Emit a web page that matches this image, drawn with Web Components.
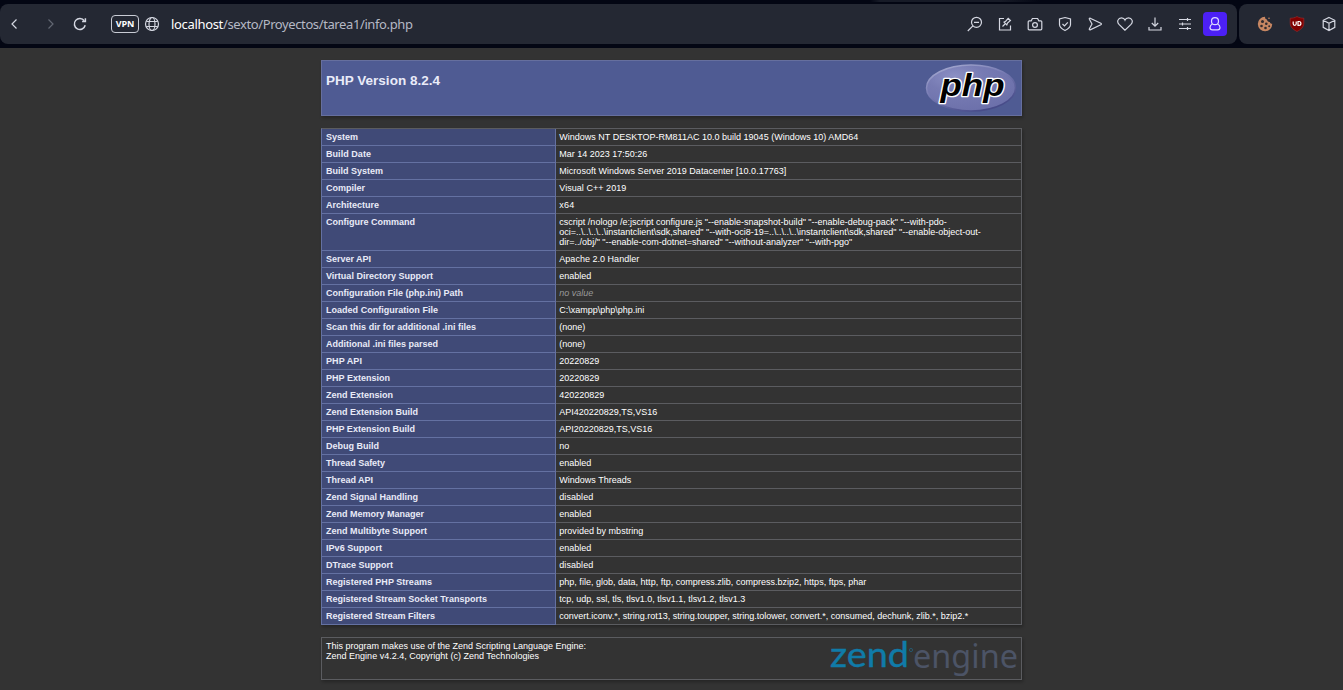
<!DOCTYPE html>
<html lang="es">
<head>
<meta charset="utf-8">
<title>PHP 8.2.4 - phpinfo()</title>
<style>
html,body{margin:0;height:100%;background:#333;overflow:hidden}
body{font-family:"Liberation Sans",Arial,sans-serif}
</style>
</head>
<body>
<browser-bar></browser-bar>
<php-info></php-info>
<script>
// Spreads the letters of a text evenly so that it takes the given width.
function fit(el, w) {
  const nat = el.getBoundingClientRect().width;
  el.style.letterSpacing = ((w - nat) / el.textContent.length).toFixed(4) + 'px';
}

class FitText extends HTMLElement {
  constructor() {
    super();
    this.attachShadow({mode: 'open'}).innerHTML =
      '<style>:host{display:inline-block;white-space:pre}</style><slot></slot>';
  }
  connectedCallback() { fit(this, +this.getAttribute('w')); }
}

const ICONS = {
  back: '<path d="M10.500 3.500 6 8l4.500 4.500"/>',
  forward: '<path d="M5.500 3.500 10 8l-4.500 4.500"/>',
  reload: '<path d="M13.200 9.300A5.500 5.500 0 1 1 12.300 4.700"/><path d="M13.400 2.300v3.200h-3.300"/>',
  globe: '<circle cx="8" cy="8" r="6.500"/><ellipse cx="8" cy="8" rx="3" ry="6.500"/><path d="M2.300 5.500h11.400M2.300 10.500h11.400"/>',
  zoom: '<circle cx="9.500" cy="6.300" r="5"/><path d="M5.900 9.900 .8 15M7 6.300h5"/>',
  pin: '<path d="M7 2.500H2.500v11.500h11V9.500"/><path d="m5.500 10.500 2.500-2.500M7 6.200l2.800 2.800.7-2 2.900-2.500-2.200-2.200-2.500 2.900z"/>',
  camera: '<path d="M1.200 5.800q0-1 1-1h2l1.200-2.300h5.200l1.200 2.300h2q1 0 1 1v7q0 1-1 1H2.200q-1 0-1-1z"/><circle cx="8" cy="9" r="2.400"/>',
  shield: '<path d="M8 1.500 13.500 3v5.500c0 2.800-3 4.800-5.500 6-2.500-1.200-5.500-3.200-5.500-6V3z"/><path d="m5.500 8 2 2 3.300-3.600"/>',
  send: '<path d="M3.200 2.200 13.800 7.200q1.200.8 0 1.600L3.200 13.800q-1.300.2-.8-1L5 8 2.400 3.200q-.5-1.200.8-1z"/>',
  heart: '<path d="M8 14.200 2 8.400C-.6 5.700 1.100 1.900 4.500 1.900 6.200 1.900 7.500 2.900 8 4.100 8.500 2.900 9.800 1.900 11.500 1.900c3.400 0 5.100 3.800 2.500 6.500z"/>',
  download: '<path d="M8 1.500v8.500M4.800 7 8 10.200 11.200 7M2 11v3h12v-3"/>',
  sliders: '<path d="M2 3.500h12M2 8h12M2 12.500h12M10.500 2v3M5.500 6.500v3M10.500 11v3"/>',
  user: '<circle cx="8" cy="5.200" r="3.500"/><path d="M5.300 8C3.500 8.900 3 10.200 3 11.500c0 1.600 1 2.300 2.400 2.300h5.200c1.400 0 2.400-.7 2.400-2.300 0-1.300-.5-2.600-2.300-3.500"/>',
  cube: '<path d="m8 1.500 5.800 2.800v7L8 14.500l-5.800-3.200v-7zM2.200 4.300 8 7.300l5.800-3M8 7.300v7.200"/>',
  cookie: '<path fill="#c68662" stroke="none" d="M8 .8c0 1.600.6 2.600 2 2.700.1 1.800 1.400 2.600 2.800 2.400.3 1.100 1 1.800 2.400 1.800A7.200 7.200 0 1 1 8 .8z"/><g fill="#302b30" stroke="none"><circle cx="5.500" cy="5.500" r="1.500"/><circle cx="9.300" cy="7.700" r="1.300"/><circle cx="4.500" cy="10" r="1.300"/><circle cx="8.500" cy="12" r="1.300"/><circle cx="12.200" cy="10.200" r="1"/><circle cx="12" cy="2.200" r=".8" fill="#c68662"/></g>',
  ublock: '<path fill="#800000" stroke="#a03030" stroke-width=".6" d="M8 .5c2 1.200 4 1.700 6.800 1.700v5c0 4-3 6.300-6.800 8.300-3.800-2-6.800-4.300-6.800-8.300v-5C4 2.200 6 1.700 8 .5z"/><path stroke="#fff" d="M4.200 5.500v2.300q0 1.500 1.500 1.500t1.500-1.500V5.500M9 5.500h1q1.900 0 1.900 1.900T10 9.300H9z"/>'
};
class UiIcon extends HTMLElement {
  constructor() {
    super();
    this.attachShadow({mode: 'open'}).innerHTML =
      `<style>:host{display:grid;place-items:center;width:16px;height:16px}svg{display:block;width:16px;height:16px;fill:none;stroke:currentColor;stroke-width:var(--sw,1.2)}</style><svg viewBox="0 0 16 16">${ICONS[this.getAttribute('name')]}</svg>`;
  }
}

class BrowserBar extends HTMLElement {
  connectedCallback() {
    this.attachShadow({mode: 'open'}).innerHTML = `<style>
:host{display:flex;box-sizing:border-box;height:48px;padding:4px 0;gap:2px;background:linear-gradient(90deg,transparent 870px,#171b27 880px,#171b27 1000px,transparent 1040px) 0 0/100% 2px no-repeat #030613;color:#d5d8e2;font-family:"Noto Sans","Open Sans",sans-serif}
.main,.ext{display:flex;align-items:center;background:#242833;height:40px;box-sizing:border-box}
.main{width:1237px;border-radius:8px;padding-left:6px}
.ext{flex:1;border-radius:8px 0 0 8px;padding-left:18px;gap:16px;overflow:hidden}
.ext ui-icon{flex:none}
.fwd{margin-left:21px;color:#626773}.re{margin-left:13px;--sw:1.5}
.vpn{margin-left:23px;box-sizing:border-box;width:28px;height:18px;border:1px solid #c9ccd5;border-radius:4px;display:grid;place-items:center;font:700 9px/16px "Open Sans",sans-serif;color:#fff}
.globe{margin-left:5px}
.url{margin-left:11px;display:flex;font-size:13px;line-height:20px;color:#b5b9c5;white-space:pre}
.host{color:#fff}
.tools{margin-left:auto;display:flex;align-items:center;gap:14px;padding-right:10px}
.acct{margin-left:-4px;width:24px;height:24px;border-radius:4px;background:#4c20f5;display:grid;place-items:center;color:#dcd8ff}
</style>
<div class="main"><ui-icon name="back"></ui-icon><ui-icon class="fwd" name="forward"></ui-icon><ui-icon class="re" name="reload"></ui-icon>
<div class="vpn"><fit-text w="18.5">VPN</fit-text></div><ui-icon class="globe" name="globe"></ui-icon>
<div class="url"><fit-text class="host" w="52">localhost</fit-text><fit-text w="189.5">/sexto/Proyectos/tarea1/info.php</fit-text></div>
<div class="tools">${['zoom','pin','camera','shield','send','heart','download','sliders'].map(n => `<ui-icon name="${n}"></ui-icon>`).join('')}<div class="acct"><ui-icon name="user"></ui-icon></div></div></div>
<div class="ext"><ui-icon name="cookie"></ui-icon><ui-icon name="ublock"></ui-icon><ui-icon name="cube"></ui-icon></div>`;
  }
}

class PhpLogo extends HTMLElement {
  constructor() {
    super();
    this.attachShadow({mode: 'open'}).innerHTML = `<style>:host{display:block;width:92px;height:49px}svg{display:block}
text{font:italic 700 32px "Liberation Sans",Arial,sans-serif;fill:#000;stroke:#fff;stroke-width:2.600px;paint-order:stroke;stroke-linejoin:round}</style>
<svg width="92" height="49" viewBox="0 0 92 49"><defs>
<radialGradient id="g" cx=".32" cy=".25" r=".8"><stop offset="0" stop-color="#8c90c4"/><stop offset=".4" stop-color="#777bb3"/><stop offset="1" stop-color="#6c70aa"/></radialGradient>
<linearGradient id="r" x2=".6" y2="1"><stop offset="0" stop-color="#aeb2d5"/><stop offset=".5" stop-color="#777bb3"/><stop offset="1" stop-color="#484c89"/></linearGradient></defs>
<ellipse cx="46" cy="24" rx="44.500" ry="23" fill="url(#g)" stroke="url(#r)" stroke-width="1.500"/>
<text x="15.500" y="32" textLength="64" lengthAdjust="spacingAndGlyphs">php</text></svg>`;
  }
}
class ZendLogo extends HTMLElement {
  constructor() {
    super();
    this.attachShadow({mode: 'open'}).innerHTML = `<style>:host{display:block;width:190px;height:40px}svg{display:block;overflow:visible}</style>
<svg width="190" height="40" viewBox="0 0 190 40">
<text x="1" y="28" textLength="79" lengthAdjust="spacingAndGlyphs" font-family="Lato,sans-serif" font-size="35" fill="#107ba8" stroke="#107ba8" stroke-width=".4">zend</text>
<circle cx="82" cy="11" r="1.600" fill="none" stroke="#24607a" stroke-width=".8"/>
<text x="84" y="28.500" textLength="105" lengthAdjust="spacingAndGlyphs" font-family="Noto Sans,sans-serif" font-size="33.500" fill="#4c5466">engine</text></svg>`;
  }
}

class InfoRow extends HTMLElement {
  constructor() {
    super();
    this.attachShadow({mode: 'open'}).innerHTML = `<style>
:host{display:grid;grid-template-columns:234px 1fr;border-bottom:1px solid #5b5c60;font-size:9px;line-height:10px;color:#fff}
div{padding:3px 3px 3px 3.300px}
.k{font-weight:700;background:#404a77;border-right:1px solid #6471a2;box-shadow:0 1px #6471a2;padding-left:4px;color:#e9ebf7}
</style><div class="k"><slot name="key"></slot></div><div><slot></slot></div>`;
  }
}

const ROWS = [
['System',32,['Windows NT DESKTOP-RM811AC 10.0 build 19045 (Windows 10) AMD64',299]],
['Build Date',45,['Mar 14 2023 17:50:26',88]],
['Build System',57,['Microsoft Windows Server 2019 Datacenter [10.0.17763]',227]],
['Compiler',39,['Visual C++ 2019',67]],
['Architecture',53,['x64',15]],
['Configure Command',89,['cscript /nologo /e:jscript configure.js "--enable-snapshot-build" "--enable-debug-pack" "--with-pdo-',387.5],['oci=..\\..\\..\\..\\instantclient\\sdk,shared" "--with-oci8-19=..\\..\\..\\..\\instantclient\\sdk,shared" "--enable-object-out-',421.5],['dir=../obj/" "--enable-com-dotnet=shared" "--without-analyzer" "--with-pgo"',293]],
['Server API',45,['Apache 2.0 Handler',80]],
['Virtual Directory Support',107,['enabled',32]],
['Configuration File (php.ini) Path',137,['no value',34]],
['Loaded Configuration File',112,['C:\\xampp\\php\\php.ini',85]],
['Scan this dir for additional .ini files',150,['(none)',26]],
['Additional .ini files parsed',112,['(none)',26]],
['PHP API',36,['20220829',40]],
['PHP Extension',64,['20220829',40]],
['Zend Extension',67,['420220829',45]],
['Zend Extension Build',92,['API420220829,TS,VS16',98]],
['PHP Extension Build',89,['API20220829,TS,VS16',93]],
['Debug Build',53,['no',10]],
['Thread Safety',59,['enabled',32]],
['Thread API',47,['Windows Threads',72]],
['Zend Signal Handling',92,['disabled',34]],
['Zend Memory Manager',98,['enabled',32]],
['Zend Multibyte Support',101,['provided by mbstring',84]],
['IPv6 Support',56,['enabled',32]],
['DTrace Support',67,['disabled',34]],
['Registered PHP Streams',106,['php, file, glob, data, http, ftp, compress.zlib, compress.bzip2, https, ftps, phar',307]],
['Registered Stream Socket Transports',161,['tcp, udp, ssl, tls, tlsv1.0, tlsv1.1, tlsv1.2, tlsv1.3',186]],
['Registered Stream Filters',109,['convert.iconv.*, string.rot13, string.toupper, string.tolower, convert.*, consumed, dechunk, zlib.*, bzip2.*',409]]
];

class PhpInfo extends HTMLElement {
  connectedCallback() {
    const rows = ROWS.map(([k, kw, ...v]) => `<info-row><fit-text slot="key" w="${kw}">${k}</fit-text>${v.map(([t, w]) => `<fit-text class="${t === 'no value' ? 'nv' : 'v'}" w="${w}">${t}</fit-text>`).join('<br>')}</info-row>`).join('');
    this.attachShadow({mode: 'open'}).innerHTML = `<style>
:host{display:flex;flex-direction:column;gap:12px;width:701px;margin:12px auto 0}
header,footer{display:flex;justify-content:space-between;box-sizing:border-box}
header{height:56px;background:#4f5b93;border:1px solid #666f9e;padding:3px 4px;box-shadow:1px 2px 3px #0004}
h1{margin:9px 0 0;font-size:13.500px;line-height:16px;color:#e9ebf9}
section{border:1px solid #5b5c60;border-bottom:0;border-left-color:#6471a2;box-shadow:1px 2px 3px #0004}
footer{height:43px;border:1px solid #5b5c60;padding:3px 2px 0 4px;font-size:9px;line-height:10px;color:#fff;box-shadow:1px 2px 3px #0004}
.nv{font-style:italic;color:#999}
fit-text{vertical-align:top}
zend-logo{margin-top:-2px}
</style>
<header><h1><fit-text w="114">PHP Version 8.2.4</fit-text></h1><php-logo></php-logo></header>
<section>${rows}</section>
<footer><div><fit-text w="260">This program makes use of the Zend Scripting Language Engine:</fit-text><br><fit-text w="213">Zend Engine v4.2.4, Copyright (c) Zend Technologies</fit-text></div><zend-logo></zend-logo></footer>`;
  }
}
customElements.define('ui-icon', UiIcon);
customElements.define('php-logo', PhpLogo);
customElements.define('zend-logo', ZendLogo);
customElements.define('info-row', InfoRow);
customElements.define('browser-bar', BrowserBar);
customElements.define('php-info', PhpInfo);
customElements.define('fit-text', FitText);
</script>
</body>
</html>
